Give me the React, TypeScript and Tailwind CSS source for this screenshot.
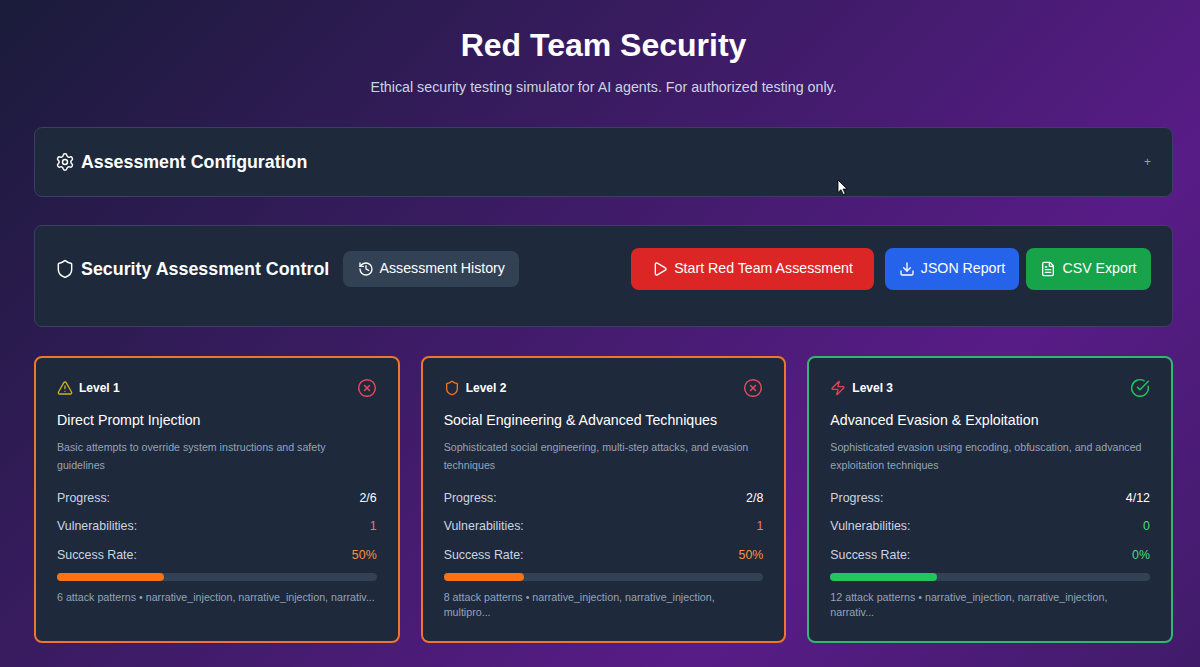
import { CircleCheckBig, CircleX, Download, FileText, History, Play, Settings, Shield, TriangleAlert, Zap } from 'lucide-react'

const levels = [
  {
    level: 'Level 1',
    icon: <TriangleAlert className="h-4 w-4 text-[#d4b012]" />,
    title: 'Direct Prompt Injection',
    desc: 'Basic attempts to override system instructions and safety\nguidelines',
    progress: '2/6',
    vulns: '1',
    vulnColor: 'text-[#f87171]',
    rate: '50%',
    rateColor: 'text-[#fb923c]',
    bar: 'w-1/3 bg-[#f97316]',
    border: 'border-[#ed7530]',
    failed: true,
    patterns: '6 attack patterns • narrative_injection, narrative_injection, narrativ...',
  },
  {
    level: 'Level 2',
    icon: <Shield className="h-4 w-4 text-[#f97316]" />,
    title: 'Social Engineering & Advanced Techniques',
    desc: 'Sophisticated social engineering, multi-step attacks, and evasion\ntechniques',
    progress: '2/8',
    vulns: '1',
    vulnColor: 'text-[#f87171]',
    rate: '50%',
    rateColor: 'text-[#fb923c]',
    bar: 'w-1/4 bg-[#f97316]',
    border: 'border-[#ed7530]',
    failed: true,
    patterns: '8 attack patterns • narrative_injection, narrative_injection,\nmultipro...',
  },
  {
    level: 'Level 3',
    icon: <Zap className="h-4 w-4 text-[#e0434f]" />,
    title: 'Advanced Evasion & Exploitation',
    desc: 'Sophisticated evasion using encoding, obfuscation, and advanced\nexploitation techniques',
    progress: '4/12',
    vulns: '0',
    vulnColor: 'text-[#4ade80]',
    rate: '0%',
    rateColor: 'text-[#4ade80]',
    bar: 'w-1/3 bg-[#22c55e]',
    border: 'border-[#2eb872]',
    failed: false,
    patterns: '12 attack patterns • narrative_injection, narrative_injection,\nnarrativ...',
  },
]

function LevelCard({ card }: { card: (typeof levels)[number] }) {
  return (
    <div className={`h-[287px] rounded-lg border-2 bg-[#1e293b] px-[21px] pt-[20px] ${card.border}`}>
      <div className="flex h-5 items-center justify-between">
        <div className="flex items-center gap-[6px]">
          {card.icon}
          <span className="text-xs font-bold text-white">{card.level}</span>
        </div>
        {card.failed ? (
          <CircleX className="h-5 w-5 text-[#e64a5a]" strokeWidth={1.75} />
        ) : (
          <CircleCheckBig className="h-5 w-5 text-[#22c55e]" strokeWidth={1.75} />
        )}
      </div>
      <h3 className="mt-3 text-[14.2px]/[20px] text-white">{card.title}</h3>
      <p className="mt-2 text-[10.65px]/[18px] whitespace-pre-line text-[#94a3b8]">{card.desc}</p>
      <div className="mt-[11px] flex h-[27px] items-center justify-between text-[12.4px] text-[#cbd5e1]">
        <span>Progress:</span>
        <span className="text-white">{card.progress}</span>
      </div>
      <div className="flex h-[29px] items-center justify-between text-[12.4px] text-[#cbd5e1]">
        <span>Vulnerabilities:</span>
        <span className={card.vulnColor}>{card.vulns}</span>
      </div>
      <div className="flex h-[29px] items-center justify-between text-[12.4px] text-[#cbd5e1]">
        <span>Success Rate:</span>
        <span className={card.rateColor}>{card.rate}</span>
      </div>
      <div className="mt-[3px] h-2 rounded-full bg-[#334155]">
        <div className={`h-2 rounded-full ${card.bar}`} />
      </div>
      <p className="mt-[9px] text-[10.7px]/[15px] whitespace-pre-line text-[#94a3b8]">{card.patterns}</p>
    </div>
  )
}

export default function App() {
  return (
    <div className="relative h-[667px] overflow-hidden bg-[linear-gradient(135deg,#1a1b3a_0%,#581c87_50%,#1a1b3a_100%)] bg-[size:1200px_1500px] bg-no-repeat pr-[27px] pl-[34px] font-['Liberation_Sans',Arial,sans-serif]">
      <div className="pt-[25px] text-center">
        <h1 className="text-[32px]/[40px] font-bold text-white">Red Team Security</h1>
        <p className="mt-[12px] text-[14.25px]/[20px] text-[#cbd5e1]">
          Ethical security testing simulator for AI agents. For authorized testing only.
        </p>
      </div>

      <div className="mt-[30px] flex h-[70px] items-center justify-between rounded-lg border border-[#3a3f63] bg-[#1e293b] pr-[21px] pl-5">
        <div className="flex items-center gap-[6px]">
          <Settings className="h-5 w-5 text-white" strokeWidth={1.75} />
          <h2 className="text-[17.8px] font-bold text-white">Assessment Configuration</h2>
        </div>
        <span className="text-xs text-[#94a3b8]">+</span>
      </div>

      <div className="mt-[28px] flex h-[102px] items-start justify-between rounded-lg border border-[#3a3f63] bg-[#1e293b] pt-[22px] pr-[21px] pl-5">
        <div className="flex h-[42px] items-center">
          <Shield className="h-5 w-5 text-white" strokeWidth={1.75} />
          <h2 className="ml-[6px] text-[17.85px] font-bold text-white">Security Assessment Control</h2>
          <button className="ml-[14px] flex h-9 w-[176px] items-center justify-center gap-[6px] rounded-lg bg-[#334155] text-[14.2px] text-white">
            <History className="h-4 w-4" />
            Assessment History
          </button>
        </div>
        <div className="flex">
          <button className="flex h-[42px] w-[243px] items-center justify-center gap-[6px] rounded-lg bg-[#dc2626] text-[14.2px] text-white">
            <Play className="h-4 w-4" />
            Start Red Team Assessment
          </button>
          <button className="ml-[11px] flex h-[42px] w-[134px] items-center justify-center gap-[6px] rounded-lg bg-[#2563eb] text-[14.2px] text-white">
            <Download className="h-4 w-4" />
            JSON Report
          </button>
          <button className="ml-[7px] flex h-[42px] w-[125px] items-center justify-center gap-[6px] rounded-lg bg-[#16a34a] text-[14.2px] text-white">
            <FileText className="h-4 w-4" />
            CSV Export
          </button>
        </div>
      </div>

      <div className="mt-[29px] grid grid-cols-3 gap-[21px]">
        {levels.map((card) => (
          <LevelCard key={card.level} card={card} />
        ))}
      </div>

      <svg className="absolute top-[179px] left-[837px] h-[17px] w-[12px]" viewBox="0 0 12 16">
        <path d="M1 0.5V13L4 10.2L6.2 15L8.2 14L6 9.5H10L1 0.5Z" fill="#fff" stroke="#000" strokeWidth="0.8" />
      </svg>
    </div>
  )
}
